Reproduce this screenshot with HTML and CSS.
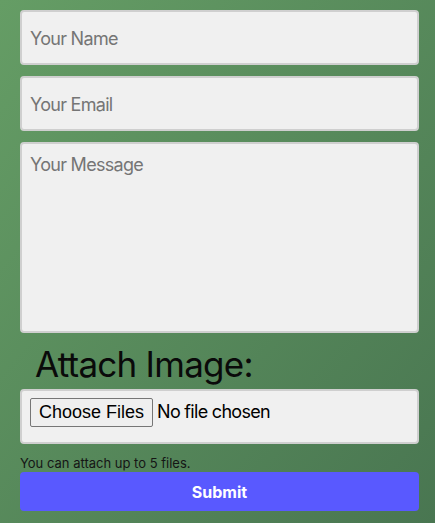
FILE: index.html
```html
<!DOCTYPE html>
<html>
<head>
<meta charset="utf-8">
<link rel="stylesheet" href="styles.css">
</head>
<body>
<form class="form">
  <input class="field" type="text" placeholder="Your Name">
  <input class="field" type="email" placeholder="Your Email">
  <textarea class="field area" placeholder="Your Message"></textarea>
  <label class="attach-label">Attach Image:</label>
  <div class="file-box"><input class="file" type="file" multiple></div>
  <p class="hint">You can attach up to 5 files.</p>
  <button class="submit" type="button">Submit</button>
</form>
</body>
</html>
```
FILE: styles.css
```css
html, body {
  margin: 0;
  height: 100%;
}
body {
  background: linear-gradient(to bottom right, #659d65, #497651);
  font-family: Inter, "Noto Sans", sans-serif;
}
.form {
  width: 399px;
  margin-left: 20px;
  padding-top: 10px;
  display: flex;
  flex-direction: column;
}
.field {
  box-sizing: border-box;
  height: 55px;
  margin: 0 0 11px 0;
  padding: 1px 8px 0 8px;
  border: 2px solid #cfcfcf;
  border-radius: 4px;
  background: #f0f0f0;
  font-family: Inter, sans-serif;
  font-size: 18px;
  letter-spacing: -0.7px;
  color: #222;
  outline: none;
}
.field::placeholder {
  color: #757575;
}
.area {
  height: 191px;
  padding-top: 10px;
  resize: none;
  margin-bottom: 8px;
}
.attach-label {
  font-size: 35px;
  letter-spacing: -0.75px;
  color: #0a0a0a;
  margin-left: 15px;
  line-height: 46px;
  margin-bottom: 2px;
}
.file-box {
  box-sizing: border-box;
  height: 55px;
  border: 2px solid #cfcfcf;
  border-radius: 4px;
  background: #f0f0f0;
  padding: 7px 8px;
}
.file {
  font-family: Inter, sans-serif;
  font-size: 18px;
  letter-spacing: -0.7px;
  color: #000;
}
.file::file-selector-button {
  font-family: "Liberation Sans", Arial, sans-serif;
  font-size: 18px;
  letter-spacing: 0;
  padding: 3px 8px;
  margin-right: 4px;
  border: 1px solid #767676;
  border-radius: 2px;
  background: #efefef;
  color: #000;
}
.hint {
  margin: 11px 0 0 0;
  font-size: 13px;
  line-height: 16px;
  color: #151515;
}
.submit {
  height: 39px;
  margin-top: 1px;
  border: none;
  border-radius: 4px;
  background: #5959ff;
  color: #fff;
  font-family: Inter, sans-serif;
  font-weight: 700;
  font-size: 16px;
}
```
